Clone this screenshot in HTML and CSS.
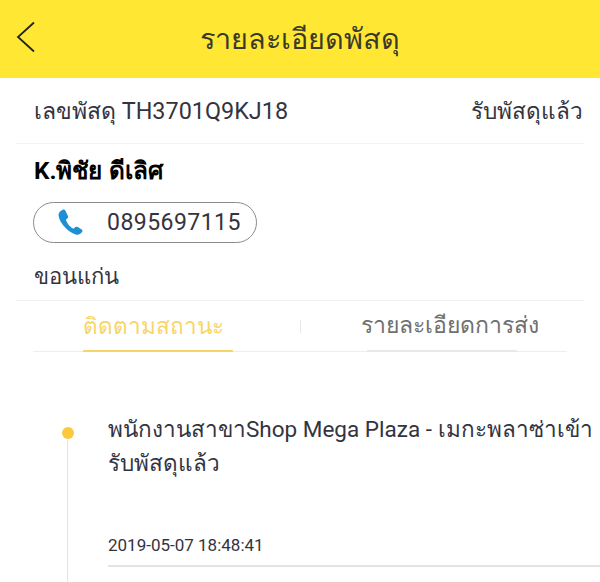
FILE: index.html
```html
<!DOCTYPE html>
<html lang="th">
<head>
<meta charset="utf-8">
<title>รายละเอียดพัสดุ</title>
<link rel="stylesheet" href="styles.css">
</head>
<body>
<header class="topbar">
  <svg class="back" width="20" height="32" viewBox="0 0 20 32"><path d="M18 1.5 L2 16 L18 30.5" fill="none" stroke="#222" stroke-width="1.8"/></svg>
  <h1 class="title">รายละเอียดพัสดุ</h1>
</header>
<section class="info">
  <div class="parcel">
    <span>เลขพัสดุ <span class="parcel-no">TH3701Q9KJ18</span></span>
    <span class="parcel-status">รับพัสดุแล้ว</span>
  </div>
  <div class="name">K.พิชัย ดีเลิศ</div>
  <div class="phone">
    <svg class="phone-icon" width="29" height="29" viewBox="0 0 28 28"><path d="M6.5 1.6 C4.2 2.6 2.6 4.2 2.4 6.4 C2.6 12 8.5 21.5 19.6 25.8 C21.5 26.3 24 25 25.3 23 C25.8 22.1 25.6 21.3 24.8 20.8 L20.6 18.2 C19.8 17.8 19 18 18.4 18.6 L16.9 20.1 C13.6 18.6 10.6 14.6 9.5 11.4 L11.1 10 C11.8 9.3 11.9 8.5 11.5 7.7 L9 2.3 C8.6 1.5 7.5 1.2 6.5 1.6 Z" fill="#1e8fd5"/></svg>
    <span class="phone-num">0895697115</span>
  </div>
  <div class="city">ขอนแก่น</div>
</section>
<nav class="tabs">
  <div class="tab tab-active"><span class="tab-label">ติดตามสถานะ</span></div>
  <div class="tab-sep"></div>
  <div class="tab tab-second"><span class="tab-label tab-muted"><span class="tab-text">รายละเอียดการส่ง</span></span></div>
</nav>
<section class="timeline">
  <div class="rail"><span class="dot"></span><span class="stem"></span></div>
  <div class="event">
    <p class="event-text">พนักงานสาขาShop Mega Plaza - เมกะพลาซ่าเข้า รับพัสดุแล้ว</p>
    <p class="event-date">2019-05-07 18:48:41</p>
  </div>
</section>
</body>
</html>
```
FILE: styles.css
```css
* { box-sizing: border-box; margin: 0; padding: 0; }
html, body { height: 582px; overflow: hidden; }
body { background: #fff; font-family: Roboto, "Noto Sans", "DejaVu Sans", sans-serif; color: #33343f; width: 600px; }
.topbar { height: 78px; background: #ffe733; display: flex; align-items: center; justify-content: center; position: relative; }
.back { position: absolute; left: 16px; top: 21px; }
.title { font-size: 28.8px; font-weight: 400; color: #3a3a2a; }
.info { padding-left: 16px; }
.parcel { height: 66px; margin-right: 16px; border-bottom: 1px solid #f3f3f3; padding: 0 1px 0 18px; display: flex; justify-content: space-between; align-items: center; font-size: 23px; }
.parcel-no { font-size: 23.4px; }
.parcel-status { font-size: 22.6px; }
.name { height: 52px; padding-left: 18px; display: flex; align-items: center; font-size: 24.3px; font-weight: 700; color: #000; }
.phone { width: 224px; height: 41px; margin-left: 17px; margin-top: 6px; border: 1px solid #8a8a8a; border-radius: 21px; display: flex; align-items: center; padding-left: 22px; }
.phone-num { font-size: 23px; margin-left: 22px; letter-spacing: 0.45px; }
.phone-icon { flex: none; }
.city { height: 58px; padding: 19px 0 0 18px; font-size: 22px; line-height: 30px; border-bottom: 1px solid #f0f0f0; margin-right: 16px; }
.tabs { height: 51px; margin: 0 33px; display: flex; align-items: center; border-bottom: 1px solid #eee; }
.tab { flex: 1; height: 50px; display: flex; justify-content: center; padding-right: 16px; }
.tab-second { padding: 0 0 0 16px; }
.tab-label { height: 51px; width: 150px; line-height: 50px; font-size: 22.5px; white-space: nowrap; }
.tab-active .tab-label { color: #f8d568; border-bottom: 2px solid #f8d568; }
.tab-muted { color: #707070; border-bottom: 2px solid #e8e8e8; font-size: 23px; }
.tab-text { margin-left: -6px; }
.tab-sep { width: 1px; height: 13px; background: #e8e8e8; }
.timeline { display: flex; padding-top: 60px; height: 230px; }
.rail { width: 108px; position: relative; flex: none; }
.dot { position: absolute; left: 62px; top: 15px; width: 12px; height: 12px; border-radius: 50%; background: #fcc93c; }
.stem { position: absolute; left: 67px; top: 27px; width: 1px; bottom: 0; background: #e4e4e4; }
.event { flex: 1; }
.event-text { font-size: 22.5px; line-height: 34px; padding-right: 6px; }
.event-date { font-size: 17px; margin-top: 47px; height: 40px; line-height: 36px; border-bottom: 2px solid #e4e4e4; }
```
